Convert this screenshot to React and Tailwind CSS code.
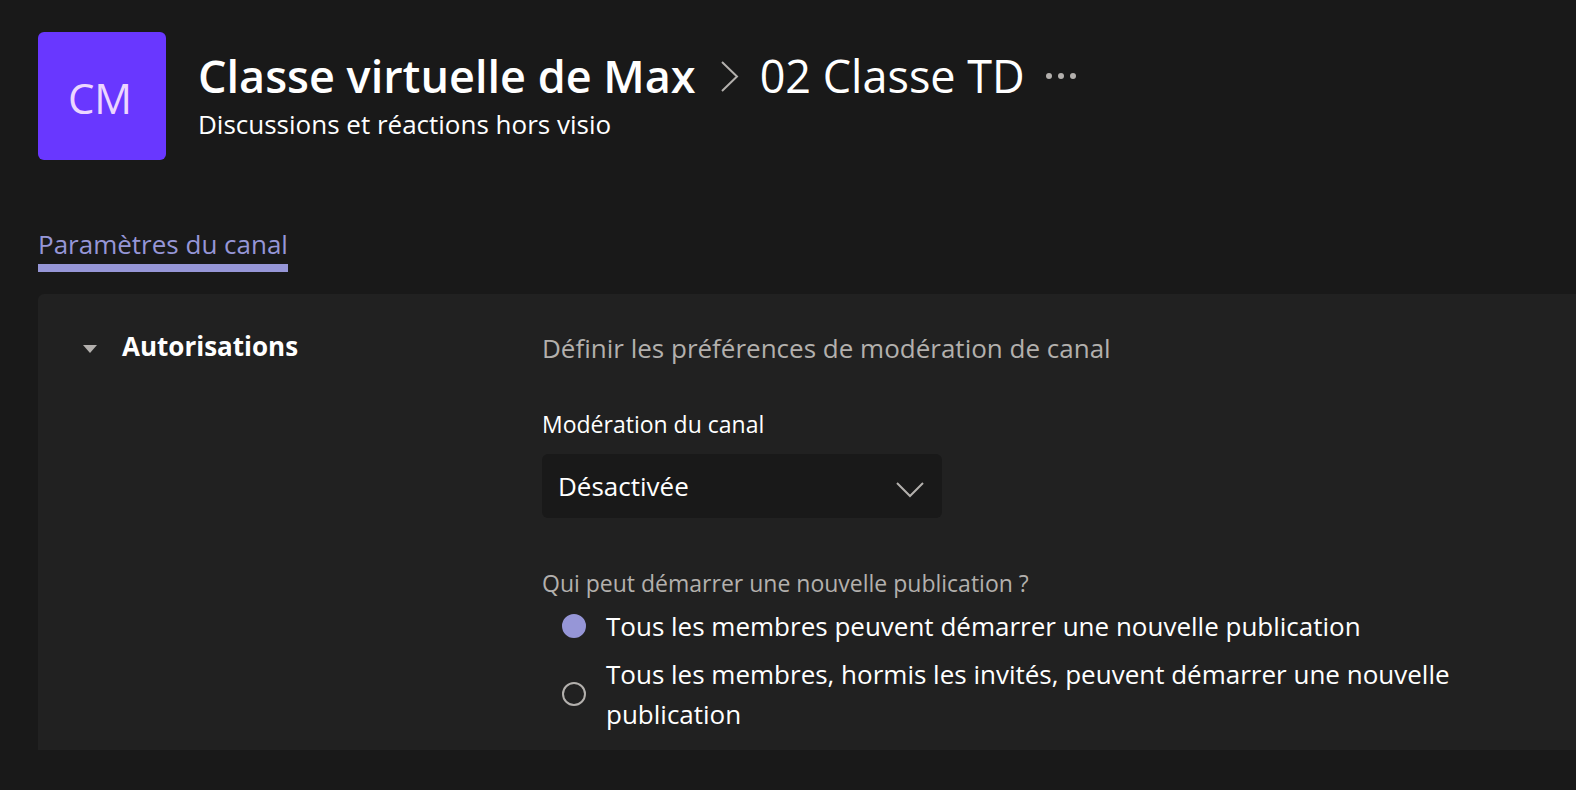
import React, { useState } from 'react'

const ChevronRight = () => (
  <svg width="20" height="32" viewBox="0 0 20 32" fill="none" aria-hidden="true">
    <path d="M2 2L17 16.500L2 31" stroke="#b3b0ad" strokeWidth="2" />
  </svg>
)

const ChevronDown = () => (
  <svg
    width="28"
    height="16"
    viewBox="0 0 28 16"
    fill="none"
    aria-hidden="true"
    className="pointer-events-none absolute right-[18px] top-7"
  >
    <path d="M1 1L14 14L27 1" stroke="#b3b0ad" strokeWidth="2" />
  </svg>
)

const Header = () => (
  <header className="flex items-start gap-8">
    <div className="flex size-32 shrink-0 items-center justify-center rounded-md bg-[#6937ff] pr-1 pt-0.5 text-[42px] text-[#ecd6ff]">
      CM
    </div>
    <div className="pt-[14px]">
      <div className="flex items-center text-[45px] leading-[60px]">
        <h1 className="font-semibold">Classe virtuelle de Max</h1>
        <span className="ml-6 mr-5">
          <ChevronRight />
        </span>
        <h2>02 Classe TD</h2>
        <button type="button" aria-label="Plus d'options" className="ml-5">
          <svg width="32" height="8" viewBox="0 0 32 8" fill="#b3b0ad" aria-hidden="true">
            <circle cx="4" cy="4" r="3" />
            <circle cx="16" cy="4" r="3" />
            <circle cx="28" cy="4" r="3" />
          </svg>
        </button>
      </div>
      <p className="text-[26px] leading-9">Discussions et réactions hors visio</p>
    </div>
  </header>
)

const RadioOption = ({ label, checked, onChange }) => (
  <label className="flex items-center gap-5 text-[26px] leading-10">
    <input
      type="radio"
      name="publication"
      checked={checked}
      onChange={onChange}
      className="size-6 shrink-0 appearance-none rounded-full border-2 border-[#b3b0ad] checked:border-[#9696d7] checked:bg-[#9696d7]"
    />
    <span>{label}</span>
  </label>
)

const options = [
  'Tous les membres peuvent démarrer une nouvelle publication',
  'Tous les membres, hormis les invités, peuvent démarrer une nouvelle publication',
]

const App = () => {
  const [selected, setSelected] = useState(0)

  return (
    <div className="min-h-screen bg-[#191919] pl-[38px] pt-8 font-['Open_Sans',sans-serif] text-white">
      <Header />

      {/* Tabs */}
      <nav className="mt-16 flex">
        <a href="#parametres" className="border-b-8 border-[#9696d7] text-[26px] leading-10 text-[#9696d7]">
          Paramètres du canal
        </a>
      </nav>

      <section className="mt-[22px] flex rounded-tl-md bg-[#212121] pb-4 pl-11 pt-[34px]">
        <div className="w-[460px] shrink-0">
          <button type="button" className="flex items-center gap-6 text-[26px] font-bold leading-9">
            <svg width="16" height="16" viewBox="0 0 16 16" fill="#b3b0ad" aria-hidden="true">
              <path d="M1 7H15L8 15Z" />
            </svg>
            Autorisations
          </button>
        </div>

        <div className="max-w-[940px]">
          <p className="text-[26px] leading-10 text-[#b3b0ad]">Définir les préférences de modération de canal</p>

          <label htmlFor="moderation" className="mt-10 block text-[23px] leading-8">
            Modération du canal
          </label>
          <div className="relative mt-[14px] w-[400px]">
            <select
              id="moderation"
              defaultValue="off"
              className="h-16 w-full appearance-none rounded-md bg-[#191919] px-4 text-[26px]"
            >
              <option value="off">Désactivée</option>
              <option value="on">Activée</option>
            </select>
            <ChevronDown />
          </div>

          <fieldset className="mt-12">
            <legend className="text-[23px] leading-[34px] text-[#b3b0ad]">
              Qui peut démarrer une nouvelle publication ?
            </legend>
            <div className="mt-[6px] flex flex-col gap-2 pl-5">
              {options.map((label, index) => (
                <RadioOption
                  key={label}
                  label={label}
                  checked={selected === index}
                  onChange={() => setSelected(index)}
                />
              ))}
            </div>
          </fieldset>
        </div>
      </section>
    </div>
  )
}

export default App
